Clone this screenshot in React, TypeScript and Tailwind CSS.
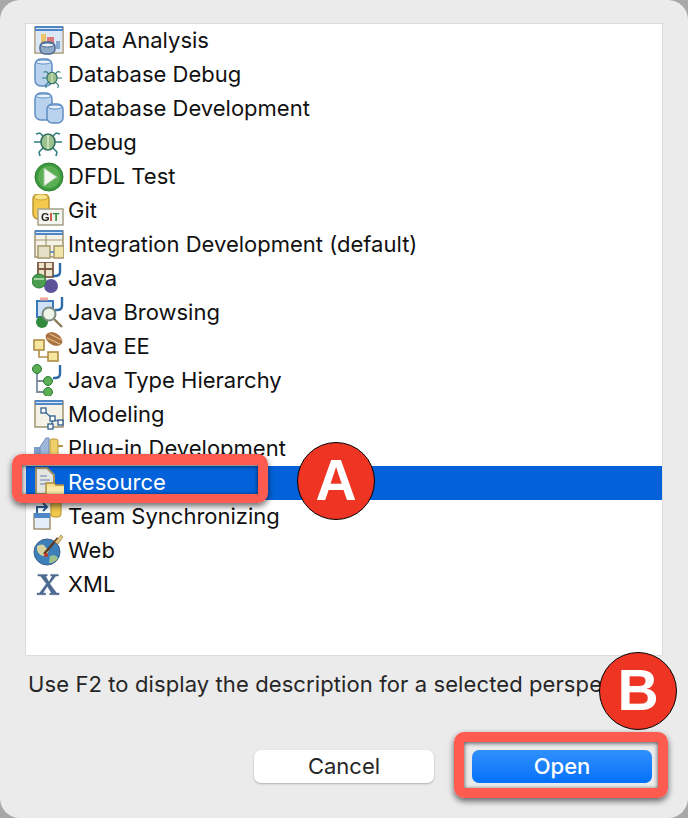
import type { FC, ReactNode } from "react"

const font = "font-['Inter','Liberation_Sans',sans-serif]"

const Svg: FC<{ children: ReactNode }> = ({ children }) => (
    <svg width="32" height="32" viewBox="0 0 32 32" className="shrink-0 blur-[0.35px]">
        {children}
    </svg>
)

const Barrel: FC<{ x: number; y: number; w: number; h: number; fill?: string; stroke?: string }> = ({ x, y, w, h, fill = "#b9d3ee", stroke = "#5f8fc6" }) => (
    <g>
        <rect x={x} y={y} width={w} height={h} rx={w / 3} fill={fill} stroke={stroke} strokeWidth="1.5" />
        <ellipse cx={x + w / 2} cy={y + 3} rx={w / 2 - 1} ry="2" fill="#e8f1fa" stroke={stroke} strokeWidth="1" />
    </g>
)

const Bug: FC<{ cx: number; cy: number; s: number }> = ({ cx, cy, s }) => (
    <g transform={`translate(${cx} ${cy}) scale(${s})`} stroke="#2f7f85" strokeWidth="1.6" fill="none">
        <path d="M-4-5L-8-9M4-5L8-9M-6 0H-14M6 0H14M-4 5L-9 10M4 5L9 10M-9 10L-8 14M9 10L8 14M-8-9L-12-8M8-9L12-8" />
        <ellipse cx="0" cy="0" rx="7" ry="8" fill="#9cc18c" stroke="#2f6f5f" />
        <path d="M0-7V7" stroke="#d6e6c8" />
    </g>
)

const JavaJ: FC<{ x: number; y: number }> = ({ x, y }) => (
    <path d={`M${x + 7} ${y}V${y + 9}Q${x + 7} ${y + 13} ${x + 2} ${y + 13}H${x}`} fill="none" stroke="#2d6aa8" strokeWidth="2.4" />
)

const WindowFrame: FC<{ children?: ReactNode }> = ({ children }) => (
    <g>
        <rect x="3" y="3" width="28" height="26" fill="#f4f1e6" stroke="#9c8c66" strokeWidth="1.4" />
        <rect x="3" y="2" width="28" height="5" fill="#4f86c6" />
        <rect x="4" y="4" width="26" height="1" fill="#dbe8f6" />
        {children}
    </g>
)

const icons: Record<string, ReactNode> = {
    data: (
        <Svg>
            <WindowFrame>
                <rect x="3.7" y="7" width="26.6" height="21.3" fill="#dbe7f4" />
                <rect x="9" y="10" width="5" height="12" fill="#eec26a" />
                <rect x="15" y="13" width="7" height="10" fill="#d9797a" />
                <rect x="24" y="17" width="4" height="8" fill="#88aacc" />
            </WindowFrame>
            <Barrel x={8} y={18} w={15} h={12} fill="#8fa9c6" stroke="#4c6a90" />
        </Svg>
    ),
    dbDebug: (
        <Svg>
            <Barrel x={3} y={1} w={17} h={27} />
            <Bug cx={20} cy={20} s={0.72} />
        </Svg>
    ),
    dbDev: (
        <Svg>
            <Barrel x={3} y={1} w={17} h={27} />
            <Barrel x={15} y={12} w={16} h={19} />
        </Svg>
    ),
    debug: (
        <Svg>
            <Bug cx={16} cy={16} s={1} />
        </Svg>
    ),
    dfdl: (
        <Svg>
            <circle cx="17" cy="17" r="14" fill="#3c9a3e" stroke="#2d7d33" />
            <circle cx="17" cy="17" r="11" fill="#5cae55" />
            <path d="M12 8L25 17L12 26Z" fill="#f3f7ef" stroke="#9cc79a" />
        </Svg>
    ),
    git: (
        <Svg>
            <rect x="1" y="0" width="16" height="25" rx="5" fill="#f2c94c" stroke="#b7912f" strokeWidth="1.4" />
            <ellipse cx="9" cy="3" rx="7" ry="3" fill="#f8e48a" stroke="#c9a238" />
            <rect x="6" y="15" width="25" height="16" fill="#f5f5f0" stroke="#a9a58c" strokeWidth="1.6" />
            <text x="9" y="27" fontSize="11" fontWeight="700" fontFamily="Liberation Sans" fill="#222">
                G<tspan fill="#c0392b">I</tspan>
                <tspan fill="#2b8a3e">T</tspan>
            </text>
        </Svg>
    ),
    integration: (
        <Svg>
            <WindowFrame>
                <path d="M3 12H31M14 7V20" stroke="#a79a78" strokeWidth="1.2" />
            </WindowFrame>
            <rect x="6" y="18" width="12" height="12" fill="#e4e1c6" stroke="#a89c70" strokeWidth="1.6" />
            <rect x="22" y="18" width="10" height="12" fill="#f0e4a8" stroke="#a89c70" strokeWidth="1.6" />
            <path d="M18 24H22" stroke="#4f86c6" strokeWidth="1.6" />
        </Svg>
    ),
    java: (
        <Svg>
            <rect x="6" y="0" width="15" height="15" fill="#eee3cc" stroke="#7a5a44" strokeWidth="1.8" />
            <path d="M13 0V15M6 7H21" stroke="#7a5a44" strokeWidth="1.8" />
            <JavaJ x={21} y={1} />
            <circle cx="19" cy="24" r="7" fill="#5d5199" />
            <circle cx="7" cy="19" r="7" fill="#4b9e4f" stroke="#2f7a38" />
            <path d="M2 17H12" stroke="#a7d3a0" strokeWidth="2" />
        </Svg>
    ),
    browsing: (
        <Svg>
            <rect x="5" y="5" width="16" height="16" fill="#cfe2f5" stroke="#3c78b8" strokeWidth="2" />
            <path d="M8 3H16" stroke="#eda5a5" strokeWidth="3" />
            <JavaJ x={23} y={1} />
            <circle cx="10" cy="26" r="6" fill="#2f8a3e" />
            <path d="M22 23L30 31" stroke="#8c7a55" strokeWidth="2.4" />
            <circle cx="17" cy="18" r="6.5" fill="#eef5e8" stroke="#7f8a80" strokeWidth="2" />
        </Svg>
    ),
    ee: (
        <Svg>
            <rect x="2" y="10" width="10" height="10" fill="#f6e6a0" stroke="#b08d45" strokeWidth="1.6" />
            <rect x="16" y="22" width="10" height="9" fill="#f6e6a0" stroke="#b08d45" strokeWidth="1.6" />
            <path d="M7 20V27H16" fill="none" stroke="#b08d45" strokeWidth="1.6" />
            <ellipse cx="22" cy="9" rx="9" ry="6" transform="rotate(30 22 9)" fill="#a9743f" />
            <path d="M15 8L28 14M18 4L30 10" stroke="#e0bb88" strokeWidth="1.3" />
        </Svg>
    ),
    hierarchy: (
        <Svg>
            <path d="M5 8V29M5 17H14M5 28H14" fill="none" stroke="#7d8da0" strokeWidth="1.8" />
            <circle cx="5" cy="5" r="4.5" fill="#5cae55" stroke="#2f7a38" />
            <circle cx="16" cy="17" r="4.5" fill="#5cae55" stroke="#2f7a38" />
            <circle cx="16" cy="28" r="4.5" fill="#5cae55" stroke="#2f7a38" />
            <JavaJ x={21} y={1} />
        </Svg>
    ),
    modeling: (
        <Svg>
            <WindowFrame>
                <path d="M12 13L21 21L19 29M21 21L28 24" fill="none" stroke="#3f6f9f" strokeWidth="1.3" />
                <rect x="9" y="10" width="5" height="5" fill="#fff" stroke="#2f5f90" strokeWidth="1.3" />
                <rect x="18" y="18" width="5" height="5" fill="#fff" stroke="#2f5f90" strokeWidth="1.3" />
                <rect x="26" y="22" width="5" height="5" fill="#fff" stroke="#2f5f90" strokeWidth="1.3" />
                <rect x="16" y="26" width="5" height="5" fill="#fff" stroke="#2f5f90" strokeWidth="1.3" />
            </WindowFrame>
        </Svg>
    ),
    plugin: (
        <Svg>
            <rect x="2" y="15" width="6" height="7" fill="#7f9fcc" />
            <path d="M8 15L14 6H17V31H14L8 22Z" fill="#9db6d9" stroke="#6d8ab5" />
            <rect x="18" y="7" width="8" height="24" rx="2" fill="#efcf6a" stroke="#b8983f" />
            <path d="M26 14H31M26 23H31" stroke="#b8983f" strokeWidth="2" />
        </Svg>
    ),
    resource: (
        <Svg>
            <path d="M4 2H15L22 9V28H4Z" fill="#e6e6e0" stroke="#a08f6a" strokeWidth="2" />
            <path d="M8 10H15M8 14H18M8 18H16" stroke="#8aa1bd" strokeWidth="1.5" />
            <path d="M14 17H22L24 19H33V32H14Z" fill="#f7dd8c" stroke="#a98c42" strokeWidth="1.4" />
            <rect x="15" y="21" width="17" height="10" fill="#fbe9a9" />
        </Svg>
    ),
    team: (
        <Svg>
            <path d="M5 14V7H14M11 3L15 7L11 11" fill="none" stroke="#2d5f96" strokeWidth="2" />
            <rect x="19" y="-2" width="10" height="19" rx="3" fill="#f2c94c" stroke="#b7912f" />
            <rect x="2" y="14" width="16" height="15" fill="#e4eef8" stroke="#9c8c66" strokeWidth="1.4" />
            <rect x="2" y="13" width="16" height="5" fill="#4f86c6" />
        </Svg>
    ),
    web: (
        <Svg>
            <circle cx="15" cy="18" r="13" fill="#3d7fb8" stroke="#3a5f8a" />
            <path d="M5 12Q12 8 14 14Q20 16 13 22Q7 22 5 16Z" fill="#d8d2a0" />
            <path d="M18 22Q24 20 26 24Q22 30 17 29Z" fill="#9cc18c" />
            <path d="M12 20L26 4" stroke="#5a3a22" strokeWidth="2.6" />
            <path d="M23 8L29 1L31 3L26 10Z" fill="#e6c88a" stroke="#a98c42" strokeWidth="0.8" />
            <circle cx="14" cy="21" r="2" fill="#c0392b" />
        </Svg>
    ),
    xml: (
        <Svg>
            <g transform="translate(2.5 3) scale(0.85)">
                <path d="M4 4H15V6H13L17 13L21 6H19V4H28V6H25L18 15L26 26H29V28H18V26H20L15 18L10 26H13V28H3V26H6L14 15L7 6H4Z" fill="#4c6a92" stroke="#3c5678" strokeWidth="0.4" />
            </g>
        </Svg>
    ),
}

const rows: { icon: string; label: string }[] = [
    { icon: "data", label: "Data Analysis" },
    { icon: "dbDebug", label: "Database Debug" },
    { icon: "dbDev", label: "Database Development" },
    { icon: "debug", label: "Debug" },
    { icon: "dfdl", label: "DFDL Test" },
    { icon: "git", label: "Git" },
    { icon: "integration", label: "Integration Development (default)" },
    { icon: "java", label: "Java" },
    { icon: "browsing", label: "Java Browsing" },
    { icon: "ee", label: "Java EE" },
    { icon: "hierarchy", label: "Java Type Hierarchy" },
    { icon: "modeling", label: "Modeling" },
    { icon: "plugin", label: "Plug-in Development" },
    { icon: "resource", label: "Resource" },
    { icon: "team", label: "Team Synchronizing" },
    { icon: "web", label: "Web" },
    { icon: "xml", label: "XML" },
]

const Badge: FC<{ letter: string; className: string }> = ({ letter, className }) => (
    <div
        className={`absolute flex h-[78px] w-[78px] items-center justify-center rounded-full border border-black bg-[#ee3524] font-['Liberation_Sans',sans-serif] text-[57px] font-bold text-white ${className}`}
    >
        {letter}
    </div>
)

export default function App() {
    return (
        <div className={`relative h-[818px] w-[688px] overflow-hidden bg-[#a8a8a8] ${font}`}>
            <div className="flex h-full flex-col rounded-[20px] bg-[#ebebeb] px-[25px] pt-[23px]">
                <div className="h-[633px] border border-[#dcdcdc] bg-white">
                    {rows.map((row) => (
                        <div
                            key={row.label}
                            className={`flex h-[34px] items-center gap-[4px] pb-[2px] pl-[6px] text-[22px] leading-none ${row.icon === "resource" ? "bg-[#0362d9] text-white" : "text-[#111111]"}`}
                        >
                            {icons[row.icon]}
                            <span>{row.label}</span>
                        </div>
                    ))}
                </div>
                <p className="mt-[15px] whitespace-nowrap pl-[3px] text-[22px] leading-[26px] tracking-[0.1px] text-[#262626]">
                    Use F2 to display the description for a selected perspective.
                </p>
                <div className="mt-[53px] flex justify-end gap-[38px] pr-[11px]">
                    <button className="h-[33px] w-[180px] rounded-[7px] bg-white pb-[2px] text-[22px] leading-none text-[#262626] shadow-[0_1px_2px_rgba(0,0,0,0.25)]">
                        Cancel
                    </button>
                    <button className="h-[33px] w-[180px] rounded-[7px] bg-gradient-to-b from-[#2f8ffb] to-[#0071fb] pb-[2px] text-[22px] font-medium leading-none text-white">
                        Open
                    </button>
                </div>
            </div>
            <div className="absolute left-[12px] top-[454px] h-[49px] w-[256px] rounded-[10px] border-x-[10px] border-t-[11px] border-b-[9px] border-[#fd5a50] shadow-[0_3px_6px_rgba(0,0,0,0.6),inset_0_1px_4px_rgba(0,0,0,0.7)]" />
            <div className="absolute left-[454px] top-[732px] h-[66px] w-[214px] rounded-[10px] border-[10px] border-[#fd5a50] shadow-[0_3px_6px_rgba(0,0,0,0.6),inset_0_1px_4px_rgba(0,0,0,0.7)]" />
            <Badge letter="A" className="left-[297px] top-[442px]" />
            <Badge letter="B" className="left-[599px] top-[652px]" />
        </div>
    )
}
